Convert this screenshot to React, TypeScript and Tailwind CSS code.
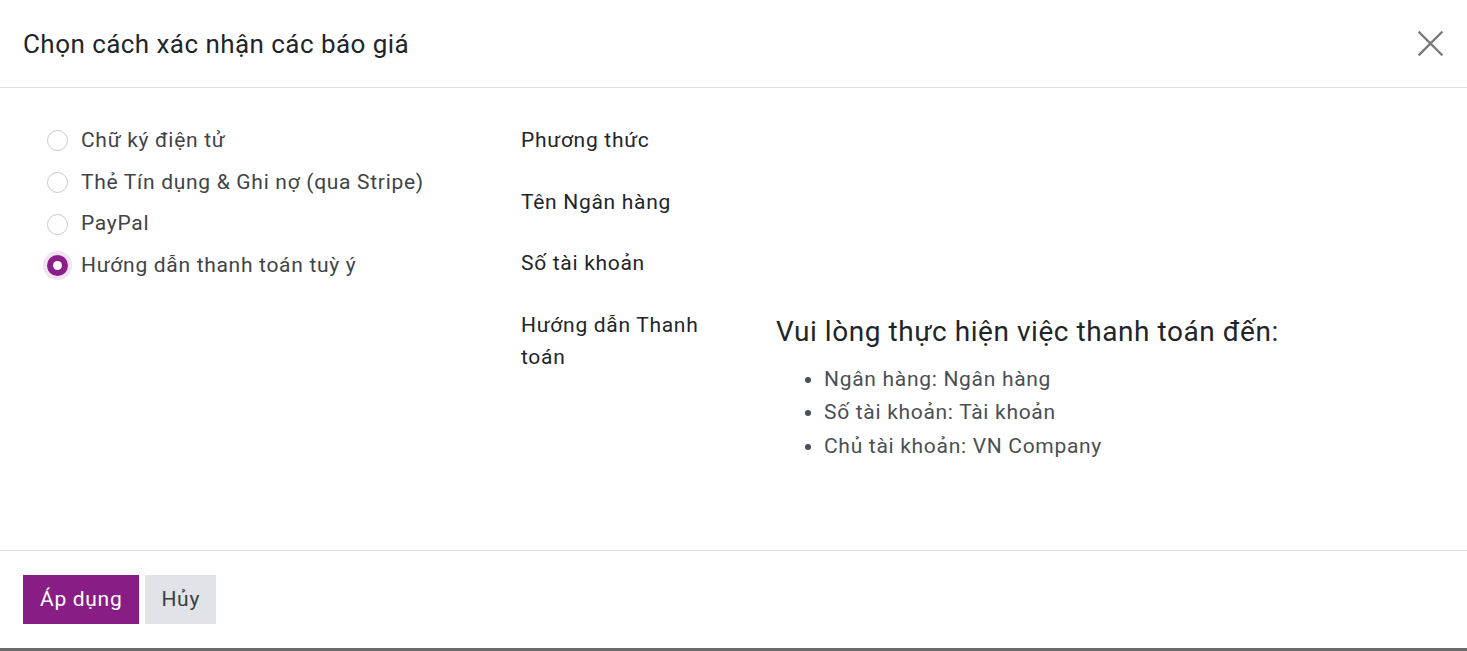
import React from "react";

function Radio({ checked }: { checked?: boolean }) {
  if (checked) {
    return (
      <span className="flex h-[21px] w-[21px] shrink-0 items-center justify-center rounded-full bg-[#8b1e88] shadow-[0_0_0_4px_rgba(139,30,136,0.12)]">
        <span className="h-[9px] w-[9px] rounded-full bg-white" />
      </span>
    );
  }
  return <span className="h-[21px] w-[21px] shrink-0 rounded-full border border-[#c9c9c9] bg-white" />;
}

export default function App() {
  const options = [
    { label: "Chữ ký điện tử" },
    { label: "Thẻ Tín dụng & Ghi nợ (qua Stripe)" },
    { label: "PayPal" },
    { label: "Hướng dẫn thanh toán tuỳ ý", checked: true },
  ];
  return (
    <div className="flex h-[651px] w-full flex-col bg-white font-['Roboto',sans-serif] text-[#212529]">
      <div className="flex h-[88px] shrink-0 items-center justify-between border-b border-[#dee2e6] pl-[23px] pr-[24px]">
        <h1 className="text-[26px] leading-none font-normal tracking-[0.45px] text-[#212529]">Chọn cách xác nhận các báo giá</h1>
        <svg width="25" height="25" viewBox="0 0 25 25" className="text-[#7a7a7a]">
          <path d="M1.5 1.5 L23.5 23.5 M23.5 1.5 L1.5 23.5" stroke="currentColor" strokeWidth="2.4" strokeLinecap="square" fill="none" />
        </svg>
      </div>
      <div className="flex flex-1 px-[23px] pt-[32px]">
        <div className="flex w-[498px] shrink-0 flex-col pl-[24px]">
          {options.map((o) => (
            <label key={o.label} className="flex h-[41.67px] items-center gap-[13px] text-[21px] tracking-[0.7px] text-[#3f4448]">
              <Radio checked={o.checked} />
              <span>{o.label}</span>
            </label>
          ))}
        </div>
        <div className="flex flex-1 flex-col pt-[4px] text-[21px] leading-[32px] tracking-[0.7px] text-[#212529]">
          <div className="flex h-[61.67px]">
            <div className="w-[255px] shrink-0">Phương thức</div>
          </div>
          <div className="flex h-[61.67px]">
            <div className="w-[255px] shrink-0">Tên Ngân hàng</div>
          </div>
          <div className="flex h-[61.67px]">
            <div className="w-[255px] shrink-0">Số tài khoản</div>
          </div>
          <div className="flex">
            <div className="w-[255px] shrink-0 pr-[40px]">Hướng dẫn Thanh toán</div>
            <div className="pt-[6px]">
              <h3 className="text-[28px] leading-[34px] font-normal tracking-[0.55px] text-[#212529]">Vui lòng thực hiện việc thanh toán đến:</h3>
              <ul className="mt-[14px] list-disc pl-[48px] text-[21px] leading-[33.5px] tracking-[0.7px] text-[#4a4f55] marker:text-[#4a4f55]">
                <li>Ngân hàng: Ngân hàng</li>
                <li>Số tài khoản: Tài khoản</li>
                <li>Chủ tài khoản: VN Company</li>
              </ul>
            </div>
          </div>
        </div>
      </div>
      <div className="flex h-[101px] shrink-0 items-start gap-[6px] border-t border-[#dee2e6] px-[23px] pt-[24px] border-b-[3px] border-b-[#6b6b6b]">
        <button className="h-[49px] bg-[#891d86] px-[17px] text-[21px] tracking-[0.7px] text-white">Áp dụng</button>
        <button className="h-[49px] bg-[#e0e3e7] px-[16px] text-[21px] tracking-[0.7px] text-[#3a3f44]">Hủy</button>
      </div>
    </div>
  );
}
